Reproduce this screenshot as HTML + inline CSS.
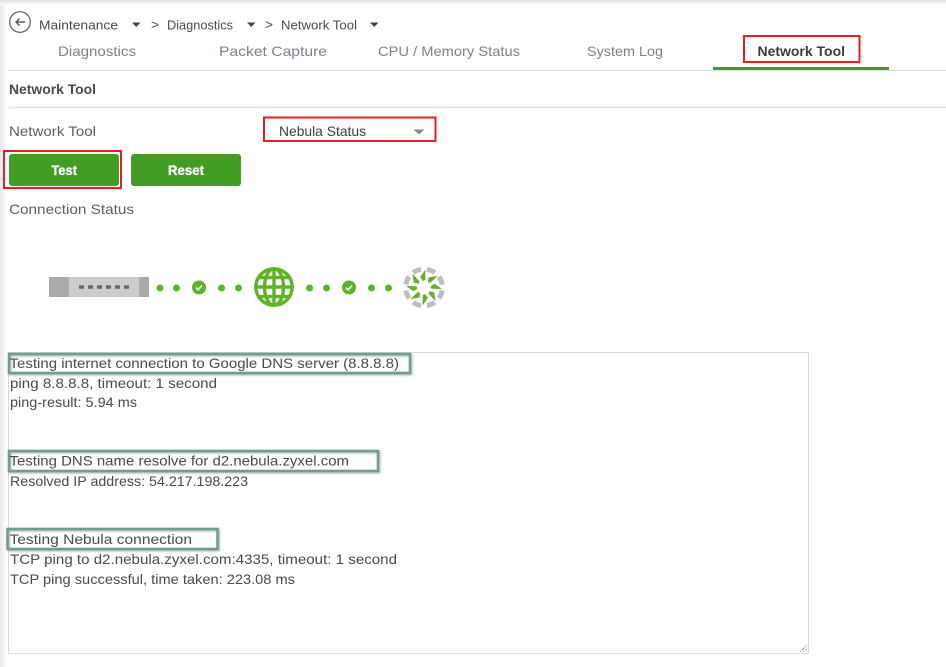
<!DOCTYPE html>
<html><head><meta charset="utf-8"><style>
html,body{margin:0;padding:0;background:#fff;width:946px;height:667px;overflow:hidden}
svg{position:absolute;left:0;top:0;display:block}
text{font-family:"Liberation Sans",sans-serif;font-size:14px;fill:#4a4a4f}
.t{fill:#7d828c}
</style></head><body>
<svg width="946" height="667" viewBox="0 0 946 667" xmlns="http://www.w3.org/2000/svg">
<defs>
<linearGradient id="gt" x1="0" y1="0" x2="0" y2="1"><stop offset="0" stop-color="#dedede"/><stop offset="1" stop-color="#fff"/></linearGradient>
<linearGradient id="gl" x1="0" y1="0" x2="1" y2="0"><stop offset="0" stop-color="#e8e8e8"/><stop offset="1" stop-color="#fff"/></linearGradient>
<g id="chk"><circle r="7" fill="#5fb327"/><path d="M-3 0.2L-0.9 2.2L3 -1.8" fill="none" stroke="#fff" stroke-width="1.6"/></g>
<path id="blob" d="M-4.200 -17.800Q0 -19 4.200 -17.800" fill="none" stroke="#bdbdbd" stroke-width="5"/>
<path id="blade" d="M1.500 -18L-3.800 -10.500L-1.200 -6.500L1.200 -7.500Z" fill="#66ae2c"/>
</defs>
<rect x="0" y="0" width="7" height="667" fill="url(#gl)"/>
<rect x="0" y="0" width="946" height="5" fill="url(#gt)"/>

<circle cx="20" cy="22" r="10.300" fill="none" stroke="#5c5c5c" stroke-width="1.200"/>
<path d="M25 22H16M19.500 18.500L16 22L19.500 25.500" fill="none" stroke="#5c5c5c" stroke-width="1.500"/>
<text x="39" y="29.500" textLength="79" lengthAdjust="spacingAndGlyphs" style="font-size:13px">Maintenance</text>
<path d="M132 22.500H140.500L136.250 27Z" fill="#444"/>
<text x="151" y="29" style="font-size:13px" textLength="8" lengthAdjust="spacingAndGlyphs">&gt;</text>
<text x="167" y="29.500" style="font-size:13px" textLength="66" lengthAdjust="spacingAndGlyphs">Diagnostics</text>
<path d="M247 22.500H255.500L251.250 27Z" fill="#444"/>
<text x="265" y="29" style="font-size:13px" textLength="8" lengthAdjust="spacingAndGlyphs">&gt;</text>
<text x="281" y="29.500" style="font-size:13px" textLength="76" lengthAdjust="spacingAndGlyphs">Network Tool</text>
<path d="M370 22.500H378.500L374.250 27Z" fill="#444"/>

<text class="t" x="58" y="56" textLength="78" lengthAdjust="spacingAndGlyphs">Diagnostics</text>
<text class="t" x="219" y="56" textLength="108" lengthAdjust="spacingAndGlyphs">Packet Capture</text>
<text class="t" x="378" y="56" textLength="142" lengthAdjust="spacingAndGlyphs">CPU / Memory Status</text>
<text class="t" x="587" y="56" textLength="76" lengthAdjust="spacingAndGlyphs">System Log</text>
<text x="757.500" y="56" textLength="87.500" lengthAdjust="spacingAndGlyphs" style="font-weight:bold;fill:#3a3a42">Network Tool</text>
<rect x="744" y="36" width="115.500" height="26" fill="none" stroke="#ed1c24" stroke-width="2"/>
<rect x="9" y="70" width="937" height="1" fill="#dcdcdc"/>
<rect x="713" y="67" width="176" height="3" fill="#439d25"/>

<text x="9" y="94" textLength="87" lengthAdjust="spacingAndGlyphs" style="font-weight:bold;fill:#4a4a4f">Network Tool</text>
<rect x="9" y="107" width="937" height="1" fill="#dcdcdc"/>
<text x="9" y="136" textLength="87" lengthAdjust="spacingAndGlyphs" style="fill:#5c5f68">Network Tool</text>
<rect x="264" y="117.500" width="171.500" height="23.500" fill="#fff" stroke="#ed1c24" stroke-width="2"/>
<text x="279" y="136" textLength="87" lengthAdjust="spacingAndGlyphs" style="fill:#3e3e4a">Nebula Status</text>
<path d="M413.500 129.500H424.500L419 134.500Z" fill="#8a8a8a"/>

<rect x="4" y="151" width="117" height="37" fill="none" stroke="#ed1c24" stroke-width="2"/>
<rect x="9" y="154" width="110" height="32" rx="3" fill="#439d25"/>
<rect x="131" y="154" width="110" height="32" rx="3" fill="#439d25"/>
<text x="51.500" y="175" textLength="25.500" lengthAdjust="spacingAndGlyphs" style="font-weight:bold;fill:#fff;stroke:#fff;stroke-width:.3">Test</text>
<text x="168" y="175" textLength="36" lengthAdjust="spacingAndGlyphs" style="font-weight:bold;fill:#fff;stroke:#fff;stroke-width:.3">Reset</text>
<text x="9" y="214" textLength="125" lengthAdjust="spacingAndGlyphs" style="fill:#5c5f68">Connection Status</text>

<rect x="49" y="277" width="100" height="20" fill="#ccc"/>
<rect x="49" y="277" width="20" height="20" fill="#aaa"/>
<rect x="139" y="277" width="10" height="20" fill="#aaa"/>
<path d="M79 287H129" stroke="#666" stroke-width="3.500" stroke-dasharray="5 4" fill="none"/>
<g fill="#5fb327"><circle cx="160" cy="288" r="3.500"/><circle cx="176.500" cy="288" r="3.500"/><circle cx="221.500" cy="288" r="3.500"/><circle cx="238.500" cy="288" r="3.500"/><circle cx="309.500" cy="288" r="3.500"/><circle cx="326.500" cy="288" r="3.500"/><circle cx="371.500" cy="288" r="3.500"/><circle cx="388.500" cy="288" r="3.500"/></g>
<use href="#chk" x="199" y="287.500"/>
<use href="#chk" x="349" y="287.500"/>
<g fill="none" stroke="#5fb327" stroke-width="3.400">
<circle cx="274" cy="287" r="18.200"/>
<ellipse cx="274" cy="287" rx="9.500" ry="18.200"/>
<path d="M274 269V305M256 287H292M259 277.500H289M259 296.500H289"/>
</g>
<g transform="translate(424 287.500)">
<use href="#blob" transform="rotate(22.500)"/><use href="#blob" transform="rotate(67.500)"/><use href="#blob" transform="rotate(112.500)"/><use href="#blob" transform="rotate(157.500)"/><use href="#blob" transform="rotate(202.500)"/><use href="#blob" transform="rotate(247.500)"/><use href="#blob" transform="rotate(292.500)"/><use href="#blob" transform="rotate(337.500)"/>
<use href="#blade"/><use href="#blade" transform="rotate(45)"/><use href="#blade" transform="rotate(90)"/><use href="#blade" transform="rotate(135)"/><use href="#blade" transform="rotate(180)"/><use href="#blade" transform="rotate(225)"/><use href="#blade" transform="rotate(270)"/><use href="#blade" transform="rotate(315)"/>
</g>

<rect x="8.500" y="352.500" width="800" height="301" fill="#fff" stroke="#d9d9d9"/>
<path d="M800.500 651.500L806.500 645.500M803.500 651.500L806.500 648.500" stroke="#666" stroke-width="1" stroke-dasharray="1 1" fill="none"/>

<g fill="none" stroke="#6f9e8d" stroke-width="2.500" style="filter:drop-shadow(1px 1px 1px rgba(0,0,0,.35))">
<rect x="9" y="354" width="401" height="19"/>
<rect x="9" y="451" width="369" height="20"/>
<rect x="7.500" y="529" width="210" height="20"/>
</g>
<g>
<text x="9.500" y="368" textLength="389.500" lengthAdjust="spacingAndGlyphs">Testing internet connection to Google DNS server (8.8.8.8)</text>
<text x="10" y="388" textLength="207" lengthAdjust="spacingAndGlyphs">ping 8.8.8.8, timeout: 1 second</text>
<text x="10" y="407" textLength="127" lengthAdjust="spacingAndGlyphs">ping-result: 5.94 ms</text>
<text x="9.500" y="465.500" textLength="339.500" lengthAdjust="spacingAndGlyphs">Testing DNS name resolve for d2.nebula.zyxel.com</text>
<text x="10" y="486" textLength="238" lengthAdjust="spacingAndGlyphs">Resolved IP address: 54.217.198.223</text>
<text x="9.500" y="544" textLength="182.500" lengthAdjust="spacingAndGlyphs">Testing Nebula connection</text>
<text x="10" y="564" textLength="387" lengthAdjust="spacingAndGlyphs">TCP ping to d2.nebula.zyxel.com:4335, timeout: 1 second</text>
<text x="10" y="584" textLength="285" lengthAdjust="spacingAndGlyphs">TCP ping successful, time taken: 223.08 ms</text>
</g>
</svg>
</body></html>
